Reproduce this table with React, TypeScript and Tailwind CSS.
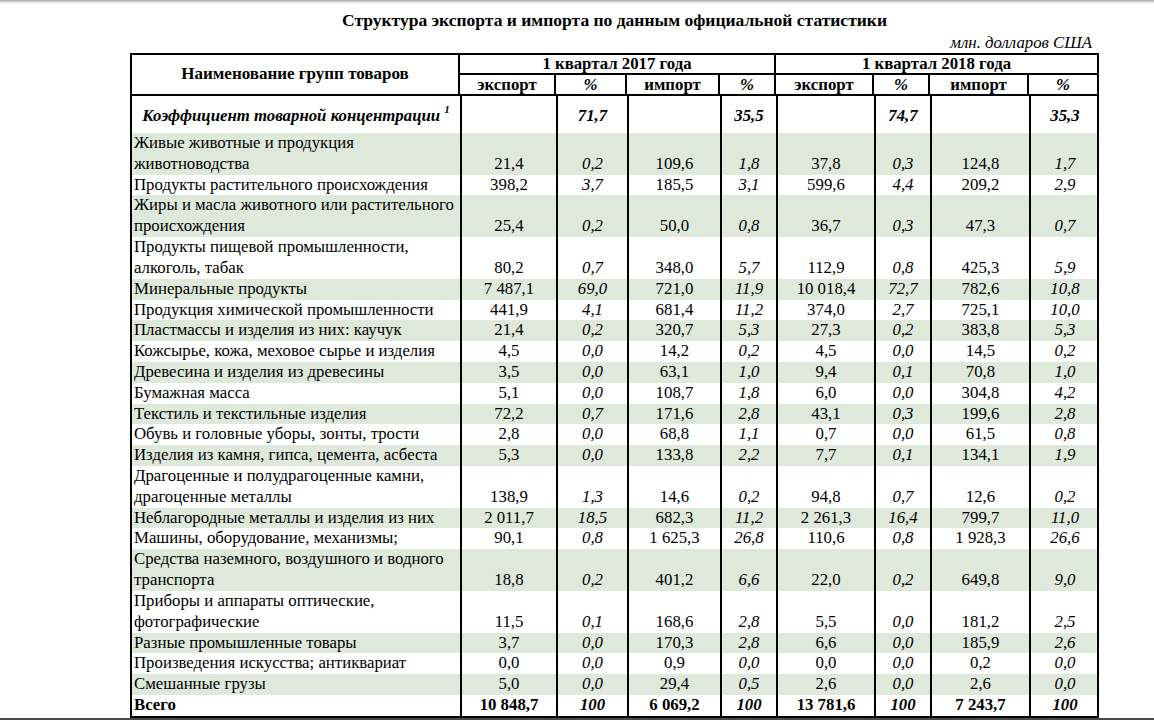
import React from "react";

type Row = { name: string[]; v: string[] };

const rows: Row[] = [
  { name: ["Живые животные и продукция", "животноводства"], v: ["21,4", "0,2", "109,6", "1,8", "37,8", "0,3", "124,8", "1,7"] },
  { name: ["Продукты растительного происхождения"], v: ["398,2", "3,7", "185,5", "3,1", "599,6", "4,4", "209,2", "2,9"] },
  { name: ["Жиры и масла животного или растительного", "происхождения"], v: ["25,4", "0,2", "50,0", "0,8", "36,7", "0,3", "47,3", "0,7"] },
  { name: ["Продукты пищевой промышленности,", "алкоголь, табак"], v: ["80,2", "0,7", "348,0", "5,7", "112,9", "0,8", "425,3", "5,9"] },
  { name: ["Минеральные продукты"], v: ["7 487,1", "69,0", "721,0", "11,9", "10 018,4", "72,7", "782,6", "10,8"] },
  { name: ["Продукция химической промышленности"], v: ["441,9", "4,1", "681,4", "11,2", "374,0", "2,7", "725,1", "10,0"] },
  { name: ["Пластмассы и изделия из них: каучук"], v: ["21,4", "0,2", "320,7", "5,3", "27,3", "0,2", "383,8", "5,3"] },
  { name: ["Кожсырье, кожа, меховое сырье и изделия"], v: ["4,5", "0,0", "14,2", "0,2", "4,5", "0,0", "14,5", "0,2"] },
  { name: ["Древесина и изделия из древесины"], v: ["3,5", "0,0", "63,1", "1,0", "9,4", "0,1", "70,8", "1,0"] },
  { name: ["Бумажная масса"], v: ["5,1", "0,0", "108,7", "1,8", "6,0", "0,0", "304,8", "4,2"] },
  { name: ["Текстиль и текстильные изделия"], v: ["72,2", "0,7", "171,6", "2,8", "43,1", "0,3", "199,6", "2,8"] },
  { name: ["Обувь и головные уборы, зонты, трости"], v: ["2,8", "0,0", "68,8", "1,1", "0,7", "0,0", "61,5", "0,8"] },
  { name: ["Изделия из камня, гипса, цемента, асбеста"], v: ["5,3", "0,0", "133,8", "2,2", "7,7", "0,1", "134,1", "1,9"] },
  { name: ["Драгоценные и полудрагоценные камни,", "драгоценные металлы"], v: ["138,9", "1,3", "14,6", "0,2", "94,8", "0,7", "12,6", "0,2"] },
  { name: ["Неблагородные металлы и изделия из них"], v: ["2 011,7", "18,5", "682,3", "11,2", "2 261,3", "16,4", "799,7", "11,0"] },
  { name: ["Машины, оборудование, механизмы;"], v: ["90,1", "0,8", "1 625,3", "26,8", "110,6", "0,8", "1 928,3", "26,6"] },
  { name: ["Средства наземного, воздушного и водного", "транспорта"], v: ["18,8", "0,2", "401,2", "6,6", "22,0", "0,2", "649,8", "9,0"] },
  { name: ["Приборы и аппараты оптические,", "фотографические"], v: ["11,5", "0,1", "168,6", "2,8", "5,5", "0,0", "181,2", "2,5"] },
  { name: ["Разные промышленные товары"], v: ["3,7", "0,0", "170,3", "2,8", "6,6", "0,0", "185,9", "2,6"] },
  { name: ["Произведения искусства; антиквариат"], v: ["0,0", "0,0", "0,9", "0,0", "0,0", "0,0", "0,2", "0,0"] },
  { name: ["Смешанные грузы"], v: ["5,0", "0,0", "29,4", "0,5", "2,6", "0,0", "2,6", "0,0"] },
];

const total = ["10 848,7", "100", "6 069,2", "100", "13 781,6", "100", "7 243,7", "100"];
const coef = ["", "71,7", "", "35,5", "", "74,7", "", "35,3"];

const W = ["w-[96px]", "w-[71px]", "w-[93px]", "w-[56px]", "w-[98px]", "w-[56px]", "w-[99px]", "w-[68px]"];

export default function App() {
  return (
    <div
      className="relative w-[1154px] h-[720px] bg-white overflow-hidden text-black"
      style={{ fontFamily: '"Liberation Serif", "Times New Roman", serif' }}
    >
      <div className="absolute top-0 left-0 right-0 h-[4px] bg-gradient-to-b from-[#a9a9a9] via-[#dcdcdc] to-transparent" />
      <div className="ml-[130px] w-[969px] pt-[10px]">
        <div className="text-center font-bold text-[17.5px] leading-[20px]">
          Структура экспорта и импорта по данным официальной статистики
        </div>
        <div className="mt-[3px] text-right italic text-[16.8px] leading-[20px] pr-[7px]">млн. долларов США</div>

        <div className="border-2 border-black text-[16.8px] leading-[20.82px]">
          {/* header */}
          <div className="flex border-b-2 border-black font-bold">
            <div className="w-[328px] shrink-0 border-r-2 border-black flex items-center justify-center text-[17px]">
              Наименование групп товаров
            </div>
            <div className="flex flex-col">
              <div className="flex h-[20px] border-b-2 border-black">
                <div className="w-[316px] border-r-2 border-black flex items-center justify-center leading-[18px]">
                  1 квартал 2017 года
                </div>
                <div className="w-[321px] flex items-center justify-center leading-[18px]">1 квартал 2018 года</div>
              </div>
              <div className="flex h-[19px] leading-[19px]">
                {["экспорт", "%", "импорт", "%", "экспорт", "%", "импорт", "%"].map((t, i) => (
                  <div
                    key={i}
                    className={`${W[i]} shrink-0 ${i < 7 ? "border-r-2 border-black" : ""} flex items-center justify-center ${
                      i % 2 === 1 ? "italic" : ""
                    }`}
                  >
                    {t}
                  </div>
                ))}
              </div>
            </div>
          </div>

          {/* coefficient row */}
          <div className="flex h-[37px] font-bold italic">
            <div className="w-[330px] shrink-0 border-r-2 border-black flex items-center justify-center whitespace-nowrap pt-[3px]">
              Коэффициент товарной концентрации
              <sup className="text-[11px] ml-[4px] -top-[7px]">1</sup>
            </div>
            {coef.map((x, i) => (
              <div
                key={i}
                className={`${W[i]} shrink-0 ${i < 7 ? "border-r-2 border-black" : ""} flex items-center justify-center pt-[3px]`}
              >
                {x}
              </div>
            ))}
          </div>

          {rows.map((r, idx) => (
            <div key={idx} className={`flex ${idx % 2 === 0 ? "bg-[#dfe9db]" : "bg-white"}`}>
              <div className="w-[330px] shrink-0 border-r-2 border-black pl-[2px] whitespace-nowrap">
                {r.name.map((l, j) => (
                  <div key={j}>{l}</div>
                ))}
              </div>
              {r.v.map((x, i) => (
                <div
                  key={i}
                  className={`${W[i]} shrink-0 ${i < 7 ? "border-r-2 border-black" : ""} flex items-end justify-center whitespace-nowrap ${
                    i % 2 === 1 ? "italic" : ""
                  }`}
                >
                  {x}
                </div>
              ))}
            </div>
          ))}

          <div className="flex bg-white font-bold">
            <div className="w-[330px] shrink-0 border-r-2 border-black pl-[2px]">Всего</div>
            {total.map((x, i) => (
              <div
                key={i}
                className={`${W[i]} shrink-0 ${i < 7 ? "border-r-2 border-black" : ""} flex items-end justify-center whitespace-nowrap ${
                  i % 2 === 1 ? "italic" : ""
                }`}
              >
                {x}
              </div>
            ))}
          </div>
        </div>
      </div>
      <div className="absolute bottom-0 left-0 right-0 h-[2px] bg-[#4a4a4a]" />
    </div>
  );
}
